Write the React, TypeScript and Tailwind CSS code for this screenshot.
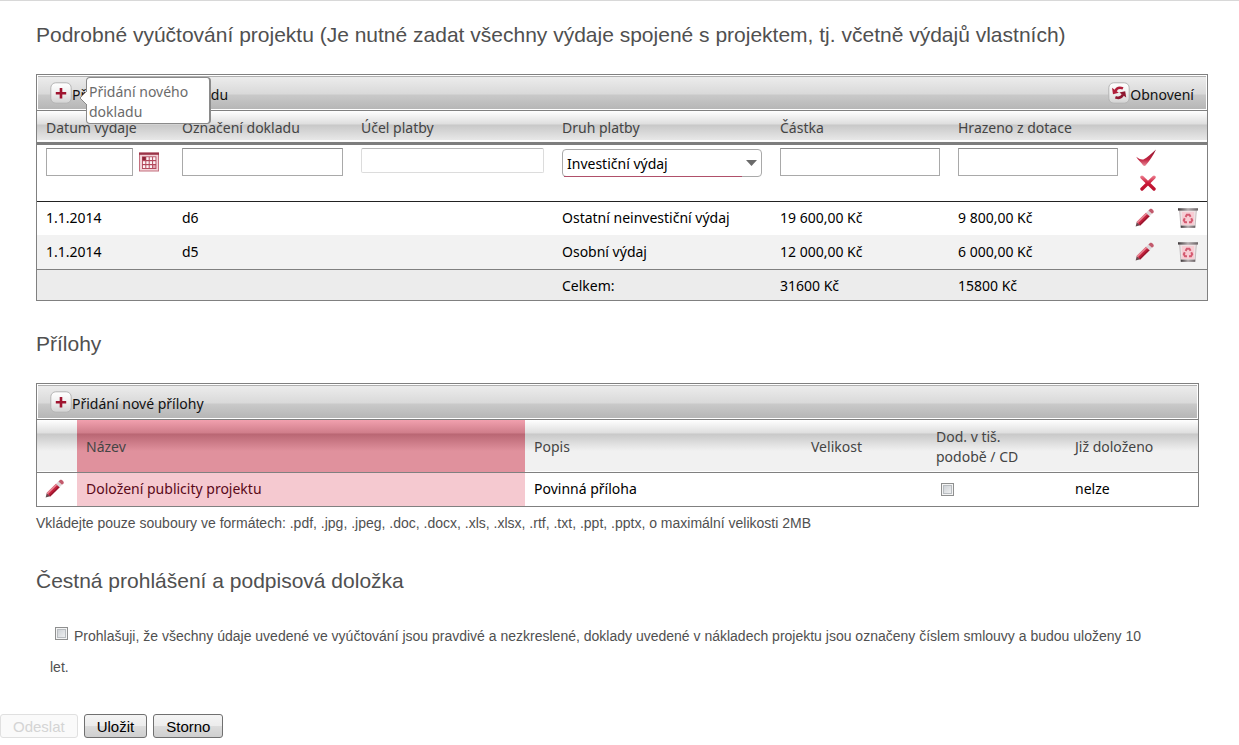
import { useState } from "react";
import type { ReactNode } from "react";

const expenses = [
  {
    date: "1.1.2014",
    label: "d6",
    purpose: "",
    type: "Ostatní neinvestiční výdaj",
    amount: "19 600,00 Kč",
    grant: "9 800,00 Kč",
  },
  {
    date: "1.1.2014",
    label: "d5",
    purpose: "",
    type: "Osobní výdaj",
    amount: "12 000,00 Kč",
    grant: "6 000,00 Kč",
  },
];

const expenseTypes = [
  "Investiční výdaj",
  "Ostatní neinvestiční výdaj",
  "Osobní výdaj",
];

const inputClass =
  "block h-7 w-full border border-[#a9a9a9] border-t-[#8c8c8c] bg-white px-1 outline-none";

function PlusIcon() {
  return (
    <svg className="h-[22px] w-[22px] shrink-0" viewBox="0 0 22 22" aria-hidden="true">
      <defs>
        <linearGradient id="plusBg" x1="0" y1="0" x2="0" y2="1">
          <stop offset="0" stopColor="#ffffff" />
          <stop offset="0.5" stopColor="#f0f0f0" />
          <stop offset="1" stopColor="#d2d2d2" />
        </linearGradient>
      </defs>
      <rect x="0.8" y="0.8" width="20.4" height="20.4" rx="5" fill="url(#plusBg)" stroke="#b4b4b4" />
      <path d="M11 6v10.4M5.8 11.2h10.4" stroke="#a01530" strokeWidth="2.6" fill="none" />
    </svg>
  );
}

function RefreshIcon() {
  return (
    <svg className="h-[22px] w-[22px] shrink-0" viewBox="0 0 22 22" aria-hidden="true">
      <rect x="0.8" y="0.8" width="20.4" height="20.4" rx="5" fill="url(#plusBg)" stroke="#b4b4b4" />
      <path d="M7.4 9C8.6 6.2 11.4 5 15 6.4" stroke="#b01e3a" strokeWidth="2.6" fill="none" />
      <path d="M4 5.8l1 6.4 5.8-1.4z" fill="#b01e3a" />
      <path d="M15 12.6C13.8 15.4 11 16.6 7.4 15.2" stroke="#8f1730" strokeWidth="2.6" fill="none" />
      <path d="M18.2 15.6l-1-6.4-5.8 1.4z" fill="#8f1730" />
    </svg>
  );
}

function CalendarIcon() {
  return (
    <svg className="h-5 w-5" viewBox="0 0 20 20" aria-hidden="true">
      <rect x="0.5" y="1" width="19" height="18" fill="#f3d3d9" stroke="#c4707f" />
      <rect x="0" y="0.6" width="20" height="2.2" fill="#9b3348" />
      <rect x="3" y="4.4" width="14.4" height="12.6" fill="#b2485c" />
      <g fill="#fdf3f5">
        <rect x="7.3" y="5.2" width="2.4" height="2.8" />
        <rect x="10.7" y="5.2" width="2.4" height="2.8" />
        <rect x="14.1" y="5.2" width="2.4" height="2.8" />
        <rect x="3.9" y="9.2" width="2.4" height="2.8" />
        <rect x="7.3" y="9.2" width="2.4" height="2.8" />
        <rect x="10.7" y="9.2" width="2.4" height="2.8" />
        <rect x="14.1" y="9.2" width="2.4" height="2.8" />
        <rect x="3.9" y="13.2" width="2.4" height="2.8" />
        <rect x="7.3" y="13.2" width="2.4" height="2.8" />
        <rect x="10.7" y="13.2" width="2.4" height="2.8" />
      </g>
      <rect x="14.1" y="13.2" width="2.4" height="2.8" fill="#e5aab5" />
      <rect x="3.6" y="5" width="3" height="3" fill="#8d2438" />
    </svg>
  );
}

function CheckIcon() {
  return (
    <svg className="h-5 w-5" viewBox="0 0 20 20" aria-hidden="true">
      <defs>
        <linearGradient id="checkFill" x1="0" y1="0" x2="0" y2="1">
          <stop offset="0" stopColor="#8f1730" />
          <stop offset="0.6" stopColor="#c22441" />
          <stop offset="1" stopColor="#e88d9b" />
        </linearGradient>
      </defs>
      <path
        d="M0.2 8.8C2.4 10.4 5 12 7.4 11.4C11.4 9.4 15.4 5.2 20 1.4C17.4 7 13.8 12.4 9.6 17.6C8.6 18.4 7.6 18 7 17.2C5 14.2 1.8 12 0.2 8.8z"
        fill="url(#checkFill)"
      />
    </svg>
  );
}

function CrossIcon() {
  return (
    <svg className="h-4 w-4" viewBox="0 0 16 16" aria-hidden="true">
      <defs>
        <linearGradient id="crossFill" gradientUnits="userSpaceOnUse" x1="0" y1="0" x2="0" y2="16">
          <stop offset="0" stopColor="#f08a9a" />
          <stop offset="0.5" stopColor="#cb1a38" />
          <stop offset="1" stopColor="#b80f2c" />
        </linearGradient>
      </defs>
      <path
        d="M2 2.2L14 14M14 2.2L2 14"
        stroke="url(#crossFill)"
        strokeWidth="3.4"
        strokeLinecap="round"
      />
    </svg>
  );
}

function PencilIcon() {
  return (
    <svg className="h-5 w-5" viewBox="0 0 20 20" aria-hidden="true">
      <path d="M0.6 18.4L1.8 14L5.2 17.2z" fill="#6a4a50" />
      <path d="M1.6 14L11 4.8L14.6 8.2L5.2 17.4z" fill="#c4203c" />
      <path d="M1.6 14L11 4.8L12.2 6L2.8 15.2z" fill="#e88795" />
      <path d="M4.2 16.4L13.6 7.2L14.6 8.2L5.2 17.4z" fill="#96152d" />
      <path d="M11 4.8L13.4 2.4L17 5.8L14.6 8.2z" fill="#dcd6d9" />
      <path d="M13.4 2.4L15 1C16.6 0.2 19.4 2.6 18.6 4.4L17 5.8z" fill="#c25a6c" />
    </svg>
  );
}

function TrashIcon() {
  return (
    <svg className="h-5 w-5" viewBox="0 0 20 20" aria-hidden="true">
      <defs>
        <linearGradient id="lidFill" x1="0" y1="0" x2="1" y2="0">
          <stop offset="0" stopColor="#3f3a3c" />
          <stop offset="0.5" stopColor="#b5adaf" />
          <stop offset="1" stopColor="#6c6567" />
        </linearGradient>
      </defs>
      <path d="M1.6 2h16.8L17 19.6H3z" fill="#efe2e4" stroke="#b9b0b2" strokeWidth="0.8" />
      <rect x="4" y="4" width="12" height="13" fill="#f7cdd4" />
      <rect x="0" y="0.2" width="20" height="2.4" fill="url(#lidFill)" />
      <rect x="2.8" y="17.6" width="14.4" height="2.2" fill="url(#lidFill)" />
      <g stroke="#d45a70" strokeWidth="2" fill="none">
        <path d="M7.6 9L8.8 6.8h2.6l1.2 2" />
        <path d="M13.2 10.2l1 2-1.2 2h-2" />
        <path d="M9 14.2H7l-1.2-2 1-2" />
      </g>
    </svg>
  );
}

function Toolbar({ children }: { children: ReactNode }) {
  return (
    <div className="border-b border-[#808080] p-px">
      <div className="flex h-[33px] items-center justify-between border-t border-[#b0b0b0] bg-[linear-gradient(to_bottom,#ececec_0px,#d9d9d9_17px,#c9c9c9_18px,#b6b6b6_32px)] pr-3 pl-3 text-[#111]">
        {children}
      </div>
    </div>
  );
}

function IconButton({ label, children }: { label: string; children: ReactNode }) {
  return (
    <button type="button" aria-label={label} className="block cursor-pointer">
      {children}
    </button>
  );
}

function Checkbox({ id, label }: { id: string; label?: string }) {
  return (
    <input
      id={id}
      type="checkbox"
      aria-label={label}
      className="inline-block h-[13px] w-[13px] appearance-none border border-[#8e8f8f] bg-linear-to-br from-[#c6cbd0] to-[#f6f6f6] shadow-[inset_0_0_0_1px_#f4f4f4,inset_0_0_0_2px_#b8bcc0] checked:bg-[#a01530]"
    />
  );
}

function SectionTitle({ children }: { children: ReactNode }) {
  return <h2 className="text-[21px] leading-7 text-[#505050]">{children}</h2>;
}

function ExpensesTable() {
  const [type, setType] = useState(expenseTypes[0]);

  return (
    <div className="border border-[#808080] font-['Noto_Sans','Open_Sans',sans-serif] text-sm">
      <Toolbar>
        <div className="relative">
          <button type="button" className="flex items-center">
            <PlusIcon />
            <span className="pt-1">Přidání nového dokladu</span>
          </button>
          {/* Tooltip */}
          <div
            role="tooltip"
            className="absolute -top-1 left-9 z-10 w-[125px] rounded-sm border border-r-2 border-[#8a8a8a] bg-white px-0.5 pt-1 pb-px leading-5 text-[#6b6b6b]"
          >
            <svg className="absolute top-3 -left-2 h-4 w-2" viewBox="0 0 8 16" aria-hidden="true">
              <path d="M8 1L1 8l7 7" fill="#fff" stroke="#8a8a8a" />
            </svg>
            Přidání nového dokladu
          </div>
        </div>
        <button type="button" className="flex items-center">
          <RefreshIcon />
          <span className="pt-1">Obnovení</span>
        </button>
      </Toolbar>
      <table className="w-full table-fixed border-collapse text-left">
        <colgroup>
          <col className="w-[136px]" />
          <col className="w-[179px]" />
          <col className="w-[201px]" />
          <col className="w-[218px]" />
          <col className="w-[178px]" />
          <col className="w-[178px]" />
          <col className="w-[42px]" />
          <col className="w-[38px]" />
        </colgroup>
        <thead>
          <tr className="h-8 border-b-3 border-[#7d7d7d] bg-[linear-gradient(to_bottom,#ffffff_0px,#dedede_13px,#c8c8c8_14px,#ececec_31px)] text-[#444]">
            <th className="px-[9px] pt-1 font-normal">Datum výdaje</th>
            <th className="px-[9px] pt-1 font-normal">Označení dokladu</th>
            <th className="px-[9px] pt-1 font-normal">Účel platby</th>
            <th className="px-[9px] pt-1 font-normal">Druh platby</th>
            <th className="px-[9px] pt-1 font-normal">Částka</th>
            <th className="px-[9px] pt-1 font-normal">Hrazeno z dotace</th>
            <th></th>
            <th></th>
          </tr>
        </thead>
        <tbody className="text-black">
          <tr className="h-[58px] border-b border-[#222] align-top">
            <td className="px-[9px] pt-[3px]">
              <div className="flex items-center gap-1.5">
                <input type="text" aria-label="Datum výdaje" className={`${inputClass} max-w-[87px]`} />
                <button type="button" aria-label="Vybrat datum" className="shrink-0">
                  <CalendarIcon />
                </button>
              </div>
            </td>
            <td className="px-[9px] pt-[3px]">
              <input type="text" aria-label="Označení dokladu" className={inputClass} />
            </td>
            <td className="px-[9px] pt-[3px]">
              <input
                type="text"
                aria-label="Účel platby"
                className="block h-[25px] w-full rounded-xs border border-[#dcdcdc] border-t-[#b8b8b8] bg-white px-1 outline-none"
              />
            </td>
            <td className="px-[9px] pt-1">
              <div className="relative">
                <select
                  aria-label="Druh platby"
                  value={type}
                  onChange={(e) => setType(e.target.value)}
                  className="block h-7 w-full appearance-none rounded-sm border border-[#a9a9a9] bg-white pt-0.5 pl-1 outline-none"
                >
                  {expenseTypes.map((t) => (
                    <option key={t}>{t}</option>
                  ))}
                </select>
                <svg
                  className="pointer-events-none absolute top-[11px] right-[5px] h-[6px] w-[11px]"
                  viewBox="0 0 11 6"
                  aria-hidden="true"
                >
                  <path d="M0 0h11L5.5 6z" fill="#6a6a6a" />
                </svg>
                <div className="absolute bottom-0 left-0.5 h-px w-[178px] bg-[#b0506a]"></div>
              </div>
            </td>
            <td className="px-[9px] pt-[3px]">
              <input type="text" aria-label="Částka" className={inputClass} />
            </td>
            <td className="px-[9px] pt-[3px]">
              <input type="text" aria-label="Hrazeno z dotace" className={inputClass} />
            </td>
            <td className="pt-[3px] pl-[9px]">
              <div className="flex w-5 flex-col items-end gap-[7px]">
                <IconButton label="Potvrdit">
                  <CheckIcon />
                </IconButton>
                <IconButton label="Zrušit">
                  <CrossIcon />
                </IconButton>
              </div>
            </td>
            <td></td>
          </tr>
          {expenses.map((row) => (
            <tr key={row.label} className="h-[34px] even:bg-white odd:bg-[#f2f2f2]">
              <td className="px-[9px]">{row.date}</td>
              <td className="px-[9px]">{row.label}</td>
              <td className="px-[9px]">{row.purpose}</td>
              <td className="px-[9px] whitespace-nowrap">{row.type}</td>
              <td className="px-[9px]">{row.amount}</td>
              <td className="px-[9px]">{row.grant}</td>
              <td className="pl-2">
                <IconButton label="Upravit">
                  <PencilIcon />
                </IconButton>
              </td>
              <td className="pl-[9px]">
                <IconButton label="Smazat">
                  <TrashIcon />
                </IconButton>
              </td>
            </tr>
          ))}
        </tbody>
        <tfoot className="text-black">
          <tr className="h-[31px] border-t border-[#808080] bg-[#ececec]">
            <td></td>
            <td></td>
            <td></td>
            <td className="px-[9px] pt-0.5">Celkem:</td>
            <td className="px-[9px] pt-0.5">31600 Kč</td>
            <td className="px-[9px] pt-0.5">15800 Kč</td>
            <td></td>
            <td></td>
          </tr>
        </tfoot>
      </table>
    </div>
  );
}

function AttachmentsTable() {
  return (
    <div className="mr-[9px] border border-[#808080] font-['Noto_Sans','Open_Sans',sans-serif] text-sm">
      <Toolbar>
        <button type="button" className="flex items-center">
          <PlusIcon />
          <span className="pt-1">Přidání nové přílohy</span>
        </button>
      </Toolbar>
      <table className="w-full table-fixed border-collapse text-left">
        <colgroup>
          <col className="w-[40px]" />
          <col className="w-[448px]" />
          <col className="w-[277px]" />
          <col className="w-[125px]" />
          <col className="w-[139px]" />
          <col className="w-[132px]" />
        </colgroup>
        <thead>
          <tr className="h-[52px] border-b border-[#808080] bg-[linear-gradient(to_bottom,#ffffff_0px,#dedede_13px,#c8c8c8_14px,#f1f1f1_31px)] leading-5 text-[#444]">
            <th></th>
            <th className="bg-[linear-gradient(to_bottom,#f1a0ae_0px,#cf7d8a_13px,#b96673_14px,#e0919d_31px)] px-[9px] pt-0.5 font-normal">
              Název
            </th>
            <th className="px-[9px] pt-0.5 font-normal">Popis</th>
            <th className="px-[9px] pt-0.5 font-normal">Velikost</th>
            <th className="px-[9px] pt-0.5 font-normal">
              Dod. v tiš.
              <br />
              podobě / CD
            </th>
            <th className="px-[9px] pt-0.5 font-normal">Již doloženo</th>
          </tr>
        </thead>
        <tbody className="text-black">
          <tr className="h-[34px]">
            <td className="pl-2">
              <IconButton label="Upravit">
                <PencilIcon />
              </IconButton>
            </td>
            <td className="bg-[#f5c9d0] px-[9px] text-[#5a0818]">Doložení publicity projektu</td>
            <td className="px-[9px]">Povinná příloha</td>
            <td></td>
            <td className="px-3.5">
              <span className="flex">
                <Checkbox id="printed" label="Dod. v tiš. podobě / CD" />
              </span>
            </td>
            <td className="px-[9px]">nelze</td>
          </tr>
        </tbody>
      </table>
    </div>
  );
}

export default function App() {
  return (
    <div className="border-t border-[#d8d8d8] bg-white font-['Liberation_Sans',Arial,sans-serif] text-sm text-[#505050]">
      <div className="pr-[31px] pl-9">
        {/* Expenses */}
        <section className="pt-5">
          <SectionTitle>
            Podrobné vyúčtování projektu (Je nutné zadat všechny výdaje spojené s projektem, tj. včetně výdajů vlastních)
          </SectionTitle>
          <div className="pt-[25px]">
            <ExpensesTable />
          </div>
        </section>

        {/* Attachments */}
        <section className="pt-[29px]">
          <SectionTitle>Přílohy</SectionTitle>
          <div className="pt-[25px]">
            <AttachmentsTable />
          </div>
          <p className="pt-1.5 leading-5">
            Vkládejte pouze souboury ve formátech: .pdf, .jpg, .jpeg, .doc, .docx, .xls, .xlsx, .rtf, .txt, .ppt, .pptx, o maximální velikosti 2MB
          </p>
        </section>

        {/* Declaration */}
        <section className="pt-[34px]">
          <SectionTitle>Čestná prohlášení a podpisová doložka</SectionTitle>
          <p className="pt-[26px] pr-12 pl-3.5 leading-[31px]">
            <span className="mr-1.5 ml-[5px] inline-block align-[1px] leading-none">
              <Checkbox id="declaration" />
            </span>
            <label htmlFor="declaration">
              Prohlašuji, že všechny údaje uvedené ve vyúčtování jsou pravdivé a nezkreslené, doklady uvedené v nákladech projektu jsou označeny číslem smlouvy a budou uloženy 10 let.
            </label>
          </p>
        </section>
      </div>

      {/* Form actions */}
      <div className="flex gap-1.5 pt-[31px] text-[15px]">
        <button
          type="button"
          disabled
          className="h-6 rounded-[3px] border border-[#e0e0e0] bg-[#fafafa] px-3 pt-0.5 leading-5 text-[#d4d4d4]"
        >
          Odeslat
        </button>
        <button
          type="button"
          className="h-6 rounded-[3px] border border-[#707070] bg-[linear-gradient(to_bottom,#f4f4f4_0%,#ececec_50%,#dcdcdc_51%,#cfcfcf_100%)] px-3 pt-0.5 leading-5 text-black"
        >
          Uložit
        </button>
        <button
          type="button"
          className="h-6 rounded-[3px] border border-[#707070] bg-[linear-gradient(to_bottom,#f4f4f4_0%,#ececec_50%,#dcdcdc_51%,#cfcfcf_100%)] px-3 pt-0.5 leading-5 text-black"
        >
          Storno
        </button>
      </div>
    </div>
  );
}
